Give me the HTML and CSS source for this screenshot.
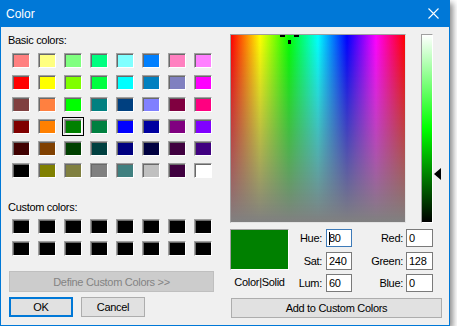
FILE: index.html
```html
<!DOCTYPE html>
<html>
<head>
<meta charset="utf-8">
<title>Color</title>
<link rel="stylesheet" href="styles.css">
</head>
<body>
<div class="window">
  <div class="titlebar">
    <span class="title">Color</span>
    <svg class="close" width="11" height="11" viewBox="0 0 11 11"><path d="M0.5 0.5L10.5 10.5M10.5 0.5L0.5 10.5" stroke="#fff" stroke-width="1.1" fill="none"/></svg>
  </div>
  <div class="content">
    <div class="left">
      <div class="label lbl-basic">Basic colors:</div>
      <div class="grid basic">
        <div class="sw" style="background:#ff8080"></div><div class="sw" style="background:#ffff80"></div><div class="sw" style="background:#80ff80"></div><div class="sw" style="background:#00ff80"></div><div class="sw" style="background:#80ffff"></div><div class="sw" style="background:#0080ff"></div><div class="sw" style="background:#ff80c0"></div><div class="sw" style="background:#ff80ff"></div>
        <div class="sw" style="background:#ff0000"></div><div class="sw" style="background:#ffff00"></div><div class="sw" style="background:#80ff00"></div><div class="sw" style="background:#00ff40"></div><div class="sw" style="background:#00ffff"></div><div class="sw" style="background:#0080c0"></div><div class="sw" style="background:#8080c0"></div><div class="sw" style="background:#ff00ff"></div>
        <div class="sw" style="background:#804040"></div><div class="sw" style="background:#ff8040"></div><div class="sw" style="background:#00ff00"></div><div class="sw" style="background:#008080"></div><div class="sw" style="background:#004080"></div><div class="sw" style="background:#8080ff"></div><div class="sw" style="background:#800040"></div><div class="sw" style="background:#ff0080"></div>
        <div class="sw" style="background:#800000"></div><div class="sw" style="background:#ff8000"></div><div class="sw sel" style="background:#008000"></div><div class="sw" style="background:#008040"></div><div class="sw" style="background:#0000ff"></div><div class="sw" style="background:#0000a0"></div><div class="sw" style="background:#800080"></div><div class="sw" style="background:#8000ff"></div>
        <div class="sw" style="background:#400000"></div><div class="sw" style="background:#804000"></div><div class="sw" style="background:#004000"></div><div class="sw" style="background:#004040"></div><div class="sw" style="background:#000080"></div><div class="sw" style="background:#000040"></div><div class="sw" style="background:#400040"></div><div class="sw" style="background:#400080"></div>
        <div class="sw" style="background:#000000"></div><div class="sw" style="background:#808000"></div><div class="sw" style="background:#808040"></div><div class="sw" style="background:#808080"></div><div class="sw" style="background:#408080"></div><div class="sw" style="background:#c0c0c0"></div><div class="sw" style="background:#400040"></div><div class="sw" style="background:#ffffff"></div>
      </div>
      <div class="label lbl-custom">Custom colors:</div>
      <div class="grid custom">
        <div class="sw blk"></div><div class="sw blk"></div><div class="sw blk"></div><div class="sw blk"></div><div class="sw blk"></div><div class="sw blk"></div><div class="sw blk"></div><div class="sw blk"></div>
        <div class="sw blk"></div><div class="sw blk"></div><div class="sw blk"></div><div class="sw blk"></div><div class="sw blk"></div><div class="sw blk"></div><div class="sw blk"></div><div class="sw blk"></div>
      </div>
      <div class="btn define">Define Custom Colors &gt;&gt;</div>
      <div class="okrow">
        <div class="btn ok">OK</div>
        <div class="btn">Cancel</div>
      </div>
    </div>
    <div class="right">
      <div class="pickers">
        <div class="spectrum">
          <span class="ch ch-l"></span><span class="ch ch-r"></span><span class="ch ch-v"></span>
        </div>
        <div class="lum">
          <div class="lumbar"></div>
          <span class="arrow"></span>
        </div>
      </div>
      <div class="controls">
        <div class="preview"></div>
        <div class="cap">Color|Solid</div>
        <div class="fl">Hue:</div><div class="fi focus"><span class="caret"></span>80</div>
        <div class="fl fl2">Red:</div><div class="fi">0</div>
        <div class="fl">Sat:</div><div class="fi">240</div>
        <div class="fl fl2">Green:</div><div class="fi">128</div>
        <div class="fl">Lum:</div><div class="fi">60</div>
        <div class="fl fl2">Blue:</div><div class="fi">0</div>
      </div>
      <div class="btn add">Add to Custom Colors</div>
    </div>
  </div>
</div>
</body>
</html>
```

FILE: styles.css
```css
* { box-sizing: border-box; }
html, body { margin: 0; padding: 0; background: #ffffff; }
body {
  font-family: "Liberation Sans", Arial, sans-serif;
  font-size: 11px;
  letter-spacing: -0.3px;
  color: #000;
}
.window {
  width: 450px;
  height: 326px;
  border: 1px solid #0078d7;
  border-top: 0;
  background: #f0f0f0;
  box-shadow: 3px 3px 6px rgba(0, 0, 0, 0.45);
  display: flex;
  flex-direction: column;
}
.titlebar {
  height: 27px;
  background: #0078d7;
  display: flex;
  align-items: center;
  justify-content: space-between;
  padding: 0 10px 0 5px;
  flex: none;
}
.title {
  color: #fff;
  font-size: 12px;
  letter-spacing: 0;
  line-height: 14px;
}
.close { display: block; }
.content {
  flex: 1;
  display: flex;
  padding-top: 7px;
}
.left {
  width: 229px;
  display: flex;
  flex-direction: column;
  flex: none;
}
.label { line-height: 14px; margin-left: 7px; }
.lbl-basic { margin-top: -1px; }
.grid {
  display: grid;
  grid-template-columns: repeat(8, 18px);
  grid-auto-rows: 15px;
  column-gap: 8px;
  row-gap: 7px;
  margin-left: 11px;
}
.basic { margin-top: 6px; }
.lbl-custom { margin-top: 22px; }
.custom { margin-top: 5px; }
.sw {
  border: 1px solid;
  border-color: #a0a0a0 #ffffff #ffffff #a0a0a0;
  box-shadow: inset 1px 1px 0 #696969;
}
.sw.blk { background: #000; }
.sw.sel { outline: 1px solid #000; outline-offset: 1px; }
.btn {
  background: #e1e1e1;
  border: 1px solid #adadad;
  display: flex;
  align-items: center;
  justify-content: center;
  color: #000;
}
.define {
  margin: 15px 0 0 8px;
  width: 205px;
  height: 21px;
  background: #cccccc;
  border-color: #bfbfbf;
  color: #838383;
}
.okrow { display: flex; gap: 8px; margin: 5px 0 0 8px; }
.okrow .btn { width: 64px; height: 20px; }
.okrow .ok { border: 2px solid #0078d7; }
.right {
  width: 212px;
  display: flex;
  flex-direction: column;
}
.pickers { display: flex; gap: 15px; align-items: flex-start; }
.spectrum {
  position: relative;
  width: 177px;
  height: 189px;
  border: 1px solid;
  border-color: #a0a0a0 #e3e3e3 #e3e3e3 #a0a0a0;
  background:
    linear-gradient(to bottom, rgba(128,128,128,0), #808080),
    linear-gradient(to right, #ff0000, #ffff00, #00ff00, #00ffff, #0000ff, #ff00ff, #ff0000);
  overflow: hidden;
}
.ch { position: absolute; background: #000; }
.ch-l { left: 49px; top: 0; width: 5px; height: 2px; }
.ch-r { left: 63px; top: 0; width: 5px; height: 2px; }
.ch-v { left: 57px; top: 5px; width: 3px; height: 4px; }
.lum { position: relative; width: 21px; height: 189px; }
.lumbar {
  width: 12px;
  height: 189px;
  border: 1px solid;
  border-color: #a0a0a0 #ffffff #ffffff #a0a0a0;
  background: linear-gradient(to bottom, #ffffff, #00ff00 50%, #000000);
}
.arrow {
  position: absolute;
  left: 13px;
  top: 134px;
  width: 0;
  height: 0;
  border-top: 6.5px solid transparent;
  border-bottom: 6.5px solid transparent;
  border-right: 7px solid #000;
}
.controls {
  display: grid;
  grid-template-columns: 59px 37px 26px 54px 27px;
  grid-template-rows: 18px 18px 18px;
  row-gap: 4.5px;
  margin-top: 6px;
}
.preview {
  grid-column: 1;
  grid-row: 1 / 3;
  background: #008000;
  border: 1px solid;
  border-color: #a0a0a0 #ffffff #ffffff #a0a0a0;
}
.cap { grid-column: 1; grid-row: 3; text-align: center; line-height: 14px; margin-top: 1px; }
.fl { text-align: right; padding-right: 4px; line-height: 18px; }
.fl2 { padding-right: 3px; }
.fi {
  background: #fff;
  border: 1px solid #7a7a7a;
  line-height: 16px;
  padding-left: 2px;
}
.fi.focus { border-color: #3d7ab8; }
.caret {
  display: inline-block;
  width: 1px;
  height: 13px;
  background: #000;
  vertical-align: -3px;
  margin-right: -1px;
}
.add { margin: 6px 0 0 1px; width: 211px; height: 20px; }
```
